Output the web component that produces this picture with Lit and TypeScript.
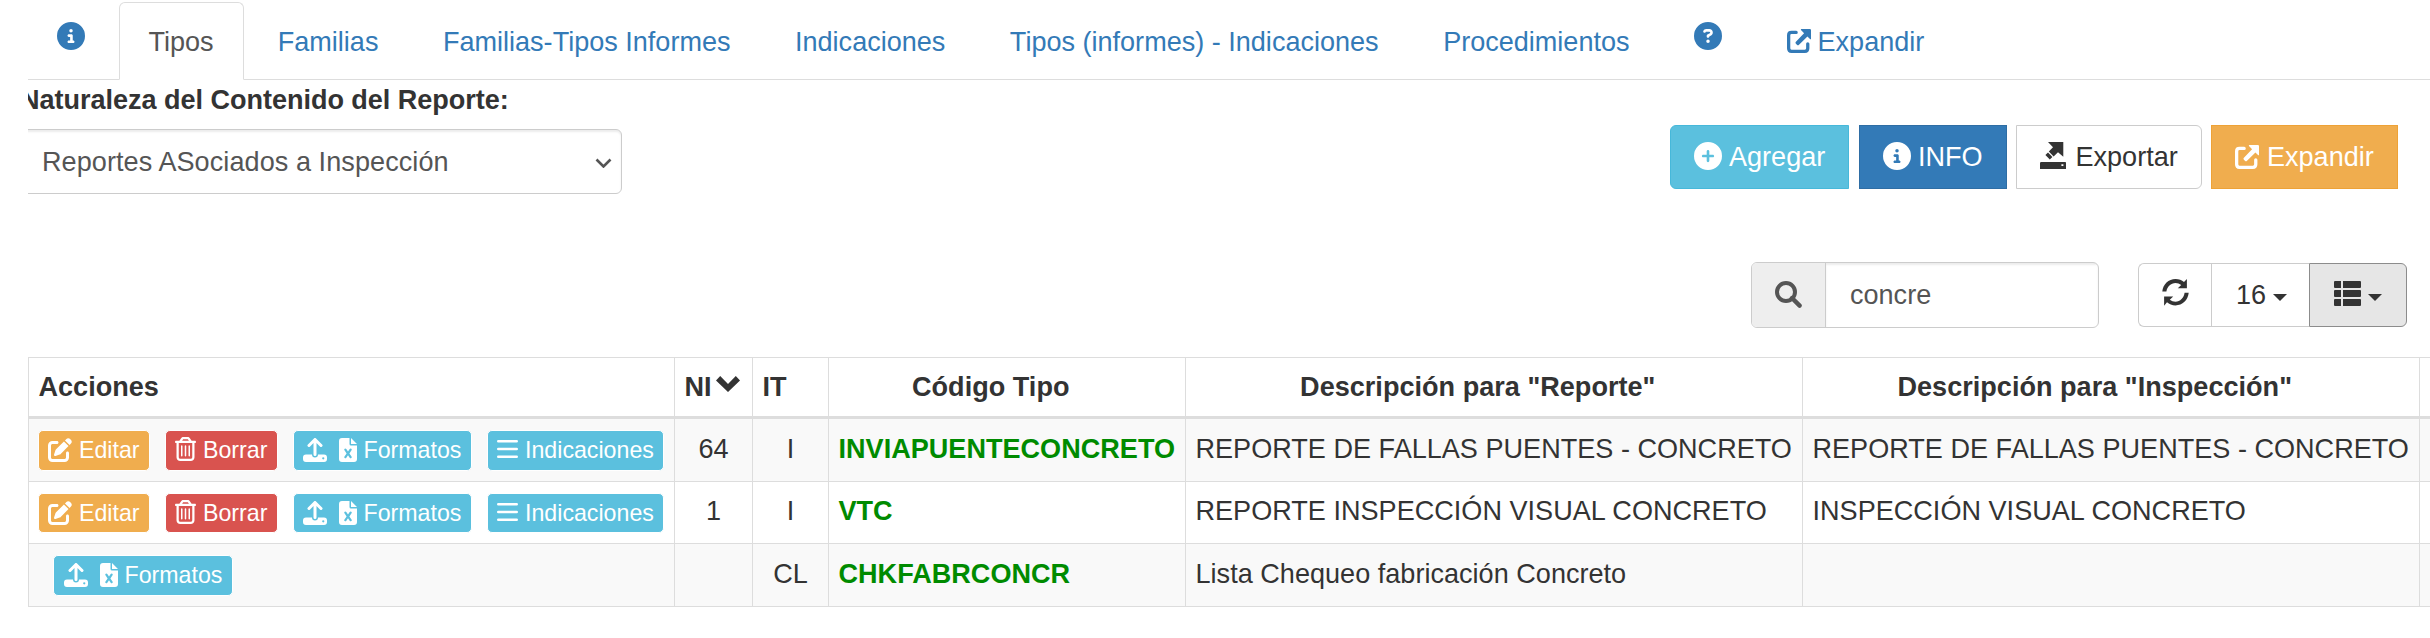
import { LitElement, html, css, svg, nothing } from "lit";
import { customElement, property } from "lit/decorators.js";

type Icon = { box: string; body: unknown };

const DISC = "M256 512A256 256 0 1 0 256 0a256 256 0 1 0 0 512z";

const ICONS: Record<string, Icon> = {
  info: {
    box: "0 0 512 512",
    body: svg`<path d="${DISC}M216 336h24V272H216c-13.3 0-24-10.7-24-24s10.7-24 24-24h48c13.3 0 24 10.7 24 24v88h8c13.3 0 24 10.7 24 24s-10.7 24-24 24H216c-13.3 0-24-10.7-24-24s10.7-24 24-24zm40-208a32 32 0 1 1 0 64 32 32 0 1 1 0-64z"/>`,
  },
  question: {
    box: "0 0 512 512",
    body: svg`<path d="${DISC}M169.8 165.3c7.9-22.3 29.1-37.3 52.8-37.3h58.3c34.9 0 63.1 28.3 63.1 63.1c0 22.6-12.1 43.5-31.7 54.8L280 264.4c-.2 13-10.9 23.6-24 23.6c-13.3 0-24-10.7-24-24V250.5c0-8.6 4.6-16.5 12.1-20.8l44.3-25.4c4.7-2.7 7.6-7.7 7.6-13.1c0-8.4-6.8-15.1-15.1-15.1H222.6c-3.4 0-6.4 2.1-7.5 5.3l-.4 1.2c-4.4 12.5-18.2 19-30.6 14.6s-19-18.2-14.6-30.6l.4-1.2zM224 352a32 32 0 1 1 64 0 32 32 0 1 1 -64 0z"/>`,
  },
  plus: {
    box: "0 0 512 512",
    body: svg`<path d="${DISC}M232 344V280H168c-13.3 0-24-10.7-24-24s10.7-24 24-24h64V168c0-13.3 10.7-24 24-24s24 10.7 24 24v64h64c13.3 0 24 10.7 24 24s-10.7 24-24 24H280v64c0 13.3-10.7 24-24 24s-24-10.7-24-24z"/>`,
  },
  expand: {
    box: "0 0 512 512",
    body: svg`<path d="M306 0H488Q512 0 512 24V206Q512 230 490 214L436 160 256 336Q234 358 212 336L190 314Q168 292 190 270L364 88 298 22Q290 0 306 0ZM96 38H196Q230 38 230 72T196 106H96Q70 106 70 132V412Q70 442 96 442H380Q408 442 408 412V316Q408 282 442 282T478 316V412Q478 512 380 512H96Q0 512 0 412V132Q0 38 96 38Z"/>`,
  },
  edit: {
    box: "0 0 512 512",
    body: svg`<path d="M471.6 21.7c-21.9-21.9-57.3-21.9-79.2 0L362.3 51.7l97.9 97.9 30.1-30.1c21.9-21.9 21.9-57.3 0-79.2L471.6 21.7zm-299.2 220c-6.1 6.1-10.8 13.6-13.5 21.9l-29.6 88.8c-2.9 8.6-.6 18.1 5.8 24.6s15.9 8.7 24.6 5.8l88.8-29.6c8.2-2.7 15.7-7.4 21.9-13.5L437.7 172.3 339.7 74.3 172.4 241.7zM96 64C43 64 0 107 0 160V416c0 53 43 96 96 96H352c53 0 96-43 96-96V320c0-17.7-14.3-32-32-32s-32 14.3-32 32v96c0 17.7-14.3 32-32 32H96c-17.7 0-32-14.3-32-32V160c0-17.7 14.3-32 32-32h96c17.7 0 32-14.3 32-32s-14.3-32-32-32H96z"/>`,
  },
  trash: {
    box: "0 0 448 512",
    body: svg`<path d="M170.5 51.6L151.5 80h145l-19-28.4c-1.5-2.2-4-3.6-6.7-3.6H177.1c-2.7 0-5.2 1.3-6.7 3.6zm147-26.6L354.2 80H368h48 8c13.3 0 24 10.7 24 24s-10.7 24-24 24h-8V432c0 44.2-35.8 80-80 80H112c-44.2 0-80-35.8-80-80V128H24c-13.3 0-24-10.7-24-24S10.7 80 24 80h8H80 93.8l36.7-55.1C140.9 9.4 158.4 0 177.1 0h93.7c18.7 0 36.2 9.4 46.6 24.9zM80 128V432c0 17.7 14.3 32 32 32H336c17.7 0 32-14.3 32-32V128H80zm80 64V400c0 8.8-7.2 16-16 16s-16-7.2-16-16V192c0-8.8 7.2-16 16-16s16 7.2 16 16zm80 0V400c0 8.8-7.2 16-16 16s-16-7.2-16-16V192c0-8.8 7.2-16 16-16s16 7.2 16 16zm80 0V400c0 8.8-7.2 16-16 16s-16-7.2-16-16V192c0-8.8 7.2-16 16-16s16 7.2 16 16z"/>`,
  },
  upload: {
    box: "0 0 512 512",
    body: svg`<path d="M288 109V352a32 32 0 0 1-64 0V109l-73 74a32 32 0 0 1-46-46L233 9a32 32 0 0 1 46 0L407 137a32 32 0 0 1-46 46ZM64 352H192a64 64 0 0 0 128 0H448a64 64 0 0 1 64 64v32a64 64 0 0 1-64 64H64a64 64 0 0 1-64-64V416a64 64 0 0 1 64-64ZM432 456a24 24 0 1 0 0-48 24 24 0 0 0 0 48Z"/>`,
  },
  sheet: {
    box: "0 0 384 512",
    body: svg`<path d="M64 0H224V128a32 32 0 0 0 32 32H384V448a64 64 0 0 1-64 64H64a64 64 0 0 1-64-64V64A64 64 0 0 1 64 0ZM256 0 384 128H256ZM156 233a24 24 0 0 0-39 30l45 65-45 65a24 24 0 0 0 39 30l36-53 36 53a24 24 0 0 0 39-30l-45-65 45-65a24 24 0 0 0-39-30l-36 53Z"/>`,
  },
  bars: {
    box: "0 0 20 18",
    body: svg`<path d="M1.2 0H18.8a1.2 1.3 0 0 1 0 2.6H1.2a1.2 1.3 0 0 1 0-2.6ZM1.2 7.7H18.8a1.2 1.3 0 0 1 0 2.6H1.2a1.2 1.3 0 0 1 0-2.6ZM1.2 15.4H18.8a1.2 1.3 0 0 1 0 2.6H1.2a1.2 1.3 0 0 1 0-2.6Z"/>`,
  },
  exportar: {
    box: "0 0 26 27",
    body: svg`<path d="M8 0H23.3V14.7L18 10.2 13.6 14.4 8.8 9.6 13 5.2ZM8 10.6 12.4 15 9.8 17.4 5.4 13ZM1.2 20H25.2Q26 20 26 20.8V27H0V21.2Q0 20 1.2 20ZM21.4 22.2V24H23.4V22.2Z"/>`,
  },
  search: {
    box: "0 0 27 27",
    body: svg`<circle cx="11" cy="11" r="9" fill="none" stroke="currentColor" stroke-width="4"/><path d="M17 17l7.6 7.6" stroke="currentColor" stroke-width="4.4" stroke-linecap="round"/>`,
  },
  refresh: {
    box: "0 0 27 27",
    body: svg`<path d="M.3 12.6C.9 5.400 6.600 0 13.500 0 16.800 0 19.800 1.200 22 3.100L24.900 0V9.300H15.800L19.200 6C17.600 4.800 15.600 4 13.500 4 8.900 4 5 7.700 4.400 12.600ZM26.700 13.800C26.100 21 20.400 26.400 13.500 26.400 10.200 26.400 7.200 25.200 5 23.300L2.100 26.700V17.500H11.200L7.800 20.700C9.400 22 11.400 22.700 13.500 22.700 18.100 22.700 22 18.800 22.600 13.800Z"/>`,
  },
  list: {
    box: "0 0 27 25",
    body: svg`<path d="M1 0H7V7H1Q0 7 0 6V1Q0 0 1 0ZM9 0H26Q27 0 27 1V6Q27 7 26 7H9ZM1 9H7V16H1Q0 16 0 15V10Q0 9 1 9ZM9 9H26Q27 9 27 10V15Q27 16 26 16H9ZM1 18H7V25H1Q0 25 0 24V19Q0 18 1 18ZM9 18H26Q27 18 27 19V24Q27 25 26 25H9Z"/>`,
  },
  chevron: {
    box: "0 0 24 16",
    body: svg`<path d="M4.200 0 12 8 19.800 0 24 4.400 12 16 0 4.400Z"/>`,
  },
  caret: { box: "0 0 14 7", body: svg`<path d="M0 0H14L7 7Z"/>` },
  select: {
    box: "0 0 17 10",
    body: svg`<path d="M1.500 1.500 8.500 8.500 15.500 1.500" fill="none" stroke="currentColor" stroke-width="2.600"/>`,
  },
};

@customElement("ui-icon")
class UiIcon extends LitElement {
  @property() name = "info";
  static styles = css`
    :host { display: block; flex: none; }
    .glyph { display: block; width: 100%; height: 100%; fill: currentColor; fill-rule: evenodd; }
  `;
  render() {
    const icon = ICONS[this.name];
    return html`<svg class="glyph" viewBox=${icon.box} preserveAspectRatio="none">${icon.body}</svg>`;
  }
}

type Row = { full: boolean; ni: string; it: string; code: string; report: string; inspection: string };

const ROWS: Row[] = [
  { full: true, ni: "64", it: "I", code: "INVIAPUENTECONCRETO", report: "REPORTE DE FALLAS PUENTES - CONCRETO", inspection: "REPORTE DE FALLAS PUENTES - CONCRETO" },
  { full: true, ni: "1", it: "I", code: "VTC", report: "REPORTE INSPECCIÓN VISUAL CONCRETO", inspection: "INSPECCIÓN VISUAL CONCRETO" },
  { full: false, ni: "", it: "CL", code: "CHKFABRCONCR", report: "Lista Chequeo fabricación Concreto", inspection: "" },
];

const TABS = [
  { id: "familias", label: "Familias" },
  { id: "familias-tipos", label: "Familias-Tipos Informes" },
  { id: "indicaciones", label: "Indicaciones" },
  { id: "tipos-indicaciones", label: "Tipos (informes) - Indicaciones" },
  { id: "procedimientos", label: "Procedimientos" },
];

@customElement("app-root")
class AppRoot extends LitElement {
  static styles = css`
    :host {
      display: block; box-sizing: border-box; height: 638px; padding-left: 28px; overflow: hidden;
      background: #fff; color: #333; font: 27.05px/38px "Liberation Sans", Arial, sans-serif;
    }
    * { box-sizing: border-box; }
    .tabs { display: flex; height: 80px; padding-top: 2px; border-bottom: 1px solid #ddd; color: #337ab7; }
    .tab { display: flex; flex: none; height: 78px; margin-right: 3px; padding: 20px 29.750px 0; border: 1px solid transparent; white-space: nowrap; }
    .tab.active { width: 125px; padding: 20px 0 0 28.500px; color: #555; background: #fff; border-color: #ddd; border-bottom-color: #fff; border-radius: 6px 6px 0 0; }
    .tab.mark { padding-top: 19px; }
    .tab.first { width: 88px; padding-left: 28px; padding-right: 0; }
    .disc { width: 28px; height: 28px; }
    .ext { width: 24px; height: 24px; }
    .tab .ext { margin: 6px 7px 0 0; }

    .filters { display: flex; justify-content: space-between; height: 182px; overflow: hidden; }
    .nature { margin-left: -8px; width: 602px; }
    .label { display: block; height: 49px; padding-top: 1px; font-weight: bold; letter-spacing: -.03px; }
    .select { display: flex; justify-content: space-between; height: 65px; padding: 13px 9px 0 21px; border: 1px solid #ccc; border-radius: 6px; color: #555; letter-spacing: .07px; box-shadow: inset 0 2px 2px rgba(0,0,0,.075); }
    .select .arrow { width: 17px; height: 10px; margin-top: 15px; }
    .actions { display: flex; padding: 45px 32px 0 0; }
    .btn { display: flex; height: 64px; padding: 12px 0 0 23px; border: 1px solid; color: #fff; white-space: nowrap; }
    .btn .disc { margin: 4px 7px 0 0; }
    .btn .ext { margin: 7px 8px 0 0; }
    .agregar { width: 179px; margin-right: 10px; border-radius: 6px 0 0 6px; }
    .infobtn { width: 148px; margin-right: 9px; }
    .export { width: 186px; margin-right: 9px; border-color: #ccc; border-radius: 0 6px 6px 0; color: #333; }
    .export .out { width: 26px; height: 27px; margin: 4px 9.500px 0 0; }
    .expand { width: 187px; }
    .info { background: #5bc0de; border-color: #46b8da; }
    .primary { background: #337ab7; border-color: #2e6da4; }
    .warning { background: #f0ad4e; border-color: #eea236; }
    .danger { background: #d9534f; border-color: #d43f3a; }

    .tools { display: flex; justify-content: flex-end; height: 95px; padding-right: 23px; }
    .search { display: flex; width: 348px; height: 66px; margin-right: 39px; border: 1px solid #ccc; border-radius: 6px; overflow: hidden; color: #555; }
    .lens { width: 74px; padding: 18px 0 0 23px; background: #eee; border-right: 1px solid #ccc; }
    .lens .i { width: 27px; height: 27px; }
    .query { flex: 1; padding: 13px 24px 0; box-shadow: inset 0 2px 2px rgba(0,0,0,.075); }
    .group { display: flex; height: 64px; margin-top: 1px; }
    .cell { display: flex; height: 64px; padding-top: 12px; border: 1px solid #ccc; background: #fff; }
    .cell .i { width: 27px; height: 27px; margin-top: 3px; }
    .reload { width: 73px; padding-left: 23px; border-right: 0; border-radius: 6px 0 0 6px; }
    .size { width: 98px; padding-left: 24px; border-right: 0; }
    .cols { width: 98px; padding-left: 24px; background: #e6e6e6; border-color: #8c8c8c; border-radius: 0 6px 6px 0; }
    .cols .list { width: 27px; height: 25px; margin-top: 5px; }
    .caret { width: 14px; height: 7px; margin: 18px 0 0 7px; }

    .table { display: grid; grid-template-columns: 646px 78px 76px 357px 617px 617px 20px; width: 2411px; border-left: 1px solid #ddd; border-top: 1px solid #ddd; }
    .row { display: contents; }
    .td { height: 63px; padding: 11px 9.500px 0; border-right: 1px solid #ddd; border-bottom: 1px solid #ddd; letter-spacing: .02px; white-space: nowrap; }
    .row:nth-child(even) .td { background: #f9f9f9; }
    .row:nth-child(3) .td { height: 62px; padding-top: 10px; }
    .row .th { height: 61px; padding-top: 10px; border-bottom-width: 3px; font-weight: bold; }
    .th.mid { padding-right: 42px; }
    .th .sort { width: 24px; height: 16px; margin: 8px 0 0 4px; }
    .flex { display: flex; }
    .mid { text-align: center; }
    .code { color: #008b00; font-weight: bold; }
    .row .td.ops { display: flex; gap: 15px; padding: 11px 0 0 9px; letter-spacing: 0; }
    .row:nth-child(4) .td.ops { padding-left: 24px; }
    .small { display: flex; flex: none; height: 41px; padding: 0 0 0 9px; border: 1px solid; border-radius: 5px; color: #fff; font-size: 23.200px; line-height: 39px; }
    .row:nth-child(3) .small { height: 40px; }
    .small .i { margin-top: 7px; }
    .edit { width: 112px; }
    .edit .i { width: 24px; height: 24px; margin-right: 7px; }
    .del { width: 113px; }
    .del .i { width: 21px; height: 24px; margin-right: 7px; margin-top: 6px; }
    .fmt { width: 179px; }
    .row:nth-child(4) .fmt { width: 180px; padding-left: 10px; }
    .fmt .up { width: 24px; height: 24px; margin-right: 12px; }
    .fmt .xl { width: 18px; height: 24px; margin-right: 6.500px; }
    .ind { width: 177px; }
    .ind .i { width: 21px; height: 18px; margin: 9px 7px 0 0; }
  `;

  private formatos() {
    return html`<div class="small fmt info"><ui-icon class="i up" name="upload"></ui-icon><ui-icon class="i xl" name="sheet"></ui-icon>Formatos</div>`;
  }

  private row(r: Row) {
    return html`<div class="row">
      <div class="td ops">
        ${r.full
          ? html`<div class="small edit warning"><ui-icon class="i" name="edit"></ui-icon>Editar</div>
              <div class="small del danger"><ui-icon class="i" name="trash"></ui-icon>Borrar</div>`
          : nothing}
        ${this.formatos()}
        ${r.full ? html`<div class="small ind info"><ui-icon class="i" name="bars"></ui-icon>Indicaciones</div>` : nothing}
      </div>
      <div class="td mid">${r.ni}</div>
      <div class="td mid">${r.it}</div>
      <div class="td code">${r.code}</div>
      <div class="td">${r.report}</div>
      <div class="td">${r.inspection}</div>
      <div class="td"></div>
    </div>`;
  }

  render() {
    return html`
      <nav class="tabs">
        <div class="tab mark first"><ui-icon class="disc" name="info"></ui-icon></div>
        <div class="tab active">Tipos</div>
        ${TABS.map((t) => html`<div class="tab">${t.label}</div>`)}
        <div class="tab mark"><ui-icon class="disc" name="question"></ui-icon></div>
        <div class="tab"><ui-icon class="ext" name="expand"></ui-icon>Expandir</div>
      </nav>
      <section class="filters">
        <div class="nature">
          <span class="label">Naturaleza del Contenido del Reporte:</span>
          <div class="select">Reportes ASociados a Inspección<ui-icon class="arrow" name="select"></ui-icon></div>
        </div>
        <div class="actions">
          <div class="btn agregar info"><ui-icon class="disc" name="plus"></ui-icon>Agregar</div>
          <div class="btn infobtn primary"><ui-icon class="disc" name="info"></ui-icon>INFO</div>
          <div class="btn export"><ui-icon class="out" name="exportar"></ui-icon>Exportar</div>
          <div class="btn expand warning"><ui-icon class="ext" name="expand"></ui-icon>Expandir</div>
        </div>
      </section>
      <section class="tools">
        <div class="search">
          <div class="lens"><ui-icon class="i" name="search"></ui-icon></div>
          <div class="query">concre</div>
        </div>
        <div class="group">
          <div class="cell reload"><ui-icon class="i" name="refresh"></ui-icon></div>
          <div class="cell size">16<ui-icon class="caret" name="caret"></ui-icon></div>
          <div class="cell cols"><ui-icon class="list" name="list"></ui-icon><ui-icon class="caret" name="caret"></ui-icon></div>
        </div>
      </section>
      <section class="table">
        <div class="row">
          <div class="td th">Acciones</div>
          <div class="td th flex">NI<ui-icon class="sort" name="chevron"></ui-icon></div>
          <div class="td th">IT</div>
          <div class="td th mid">Código Tipo</div>
          <div class="td th mid">Descripción para "Reporte"</div>
          <div class="td th mid">Descripción para "Inspección"</div>
          <div class="td th"></div>
        </div>
        ${ROWS.map((r) => this.row(r))}
      </section>
    `;
  }
}
